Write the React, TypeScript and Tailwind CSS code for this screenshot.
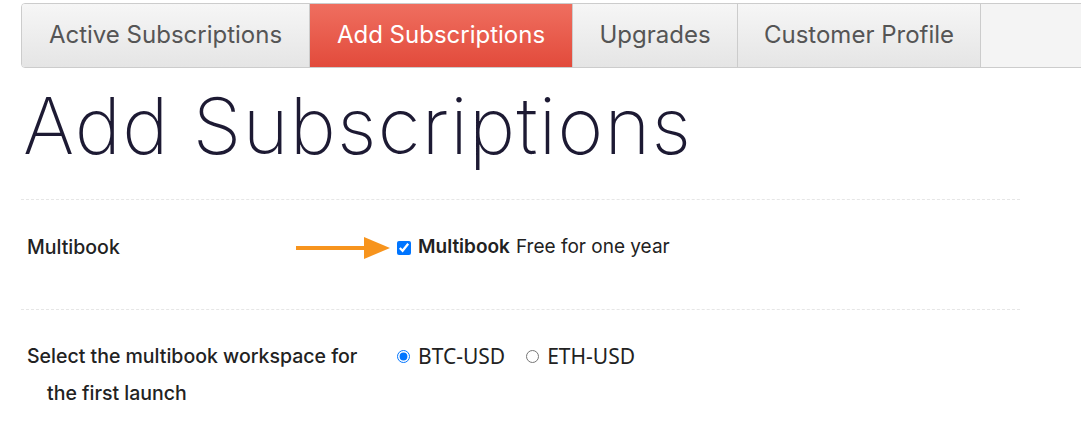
import { useState } from "react";

const tabs = [
    { label: "Active Subscriptions", width: "w-[288px]" },
    { label: "Add Subscriptions", width: "w-[263px]" },
    { label: "Upgrades", width: "w-[165px]" },
    { label: "Customer Profile", width: "w-[243px]" },
];

function Arrow() {
    return (
        <svg width="95" height="24" viewBox="0 0 95 24" className="shrink-0">
            <line x1="0" y1="12" x2="72" y2="12" stroke="#f7941d" strokeWidth="4" />
            <polygon points="68,1 94,12 68,23" fill="#f7941d" />
        </svg>
    );
}

export default function App() {
    const [active] = useState(1);
    const [workspace, setWorkspace] = useState("BTC-USD");
    const [multibook, setMultibook] = useState(true);

    return (
        <div className="w-[1081px] h-[445px] overflow-hidden bg-white font-['Inter',sans-serif]">
            <div className="pl-[21px] pt-[3px]">
                <div className="flex w-[1100px] h-[65px] border border-[#cccccc] rounded-l-[4px] overflow-hidden">
                    {tabs.map((t, i) => (
                        <div
                            key={t.label}
                            className={
                                i === active
                                    ? `${t.width} shrink-0 flex items-center justify-center pb-[2px] text-[24px] text-white bg-gradient-to-b from-[#ef6e5f] to-[#e24a3b] border-r border-[#cccccc]`
                                    : `${t.width} shrink-0 flex items-center justify-center pb-[2px] text-[24px] text-[#555555] bg-gradient-to-b from-[#f6f6f6] to-[#e5e5e5] border-r border-[#cccccc]`
                            }
                        >
                            {t.label}
                        </div>
                    ))}
                    <div className="flex-1 bg-[#f4f4f4]" />
                </div>

                <h1 className="mt-[19px] ml-[2px] text-[78px] leading-none font-extralight text-[#1d1a33] tracking-[1.3px]">
                    Add Subscriptions
                </h1>

                <div className="w-[999px] mt-[34px] border-t border-dashed border-[#e6e6e6]">
                    <div className="flex items-center h-[109px] pb-[14px] text-[19.5px] text-[#222222]">
                        <div className="w-[275px] pl-[6px] font-medium">Multibook</div>
                        <div className="flex items-center text-[19px]">
                            <Arrow />
                            <label className="flex items-center ml-[6px]">
                                <input
                                    type="checkbox"
                                    checked={multibook}
                                    onChange={(e) => setMultibook(e.target.checked)}
                                    className="w-[14px] h-[14px] m-0 accent-[#0075ff]"
                                />
                                <span className="ml-[7px] font-semibold">Multibook</span>
                                <span className="ml-[6px]">Free for one year</span>
                            </label>
                        </div>
                    </div>

                    <div className="flex items-start pt-[28px] border-t border-dashed border-[#e6e6e6] text-[19.5px] text-[#222222]">
                        <div className="w-[376px] pl-[6px] leading-[37px] font-medium">
                            <div>Select the multibook workspace for</div>
                            <div className="pl-[20px]">the first launch</div>
                        </div>
                        <div className="flex items-center h-[37px] text-[21px] font-['Noto_Sans',sans-serif]">
                            {["BTC-USD", "ETH-USD"].map((w) => (
                                <label key={w} className="flex items-center mr-[21px]">
                                    <input
                                        type="radio"
                                        name="workspace"
                                        checked={workspace === w}
                                        onChange={() => setWorkspace(w)}
                                        className="w-[13px] h-[13px] m-0 accent-[#0075ff]"
                                    />
                                    <span className="ml-[8px]">{w}</span>
                                </label>
                            ))}
                        </div>
                    </div>
                </div>
            </div>
        </div>
    );
}
